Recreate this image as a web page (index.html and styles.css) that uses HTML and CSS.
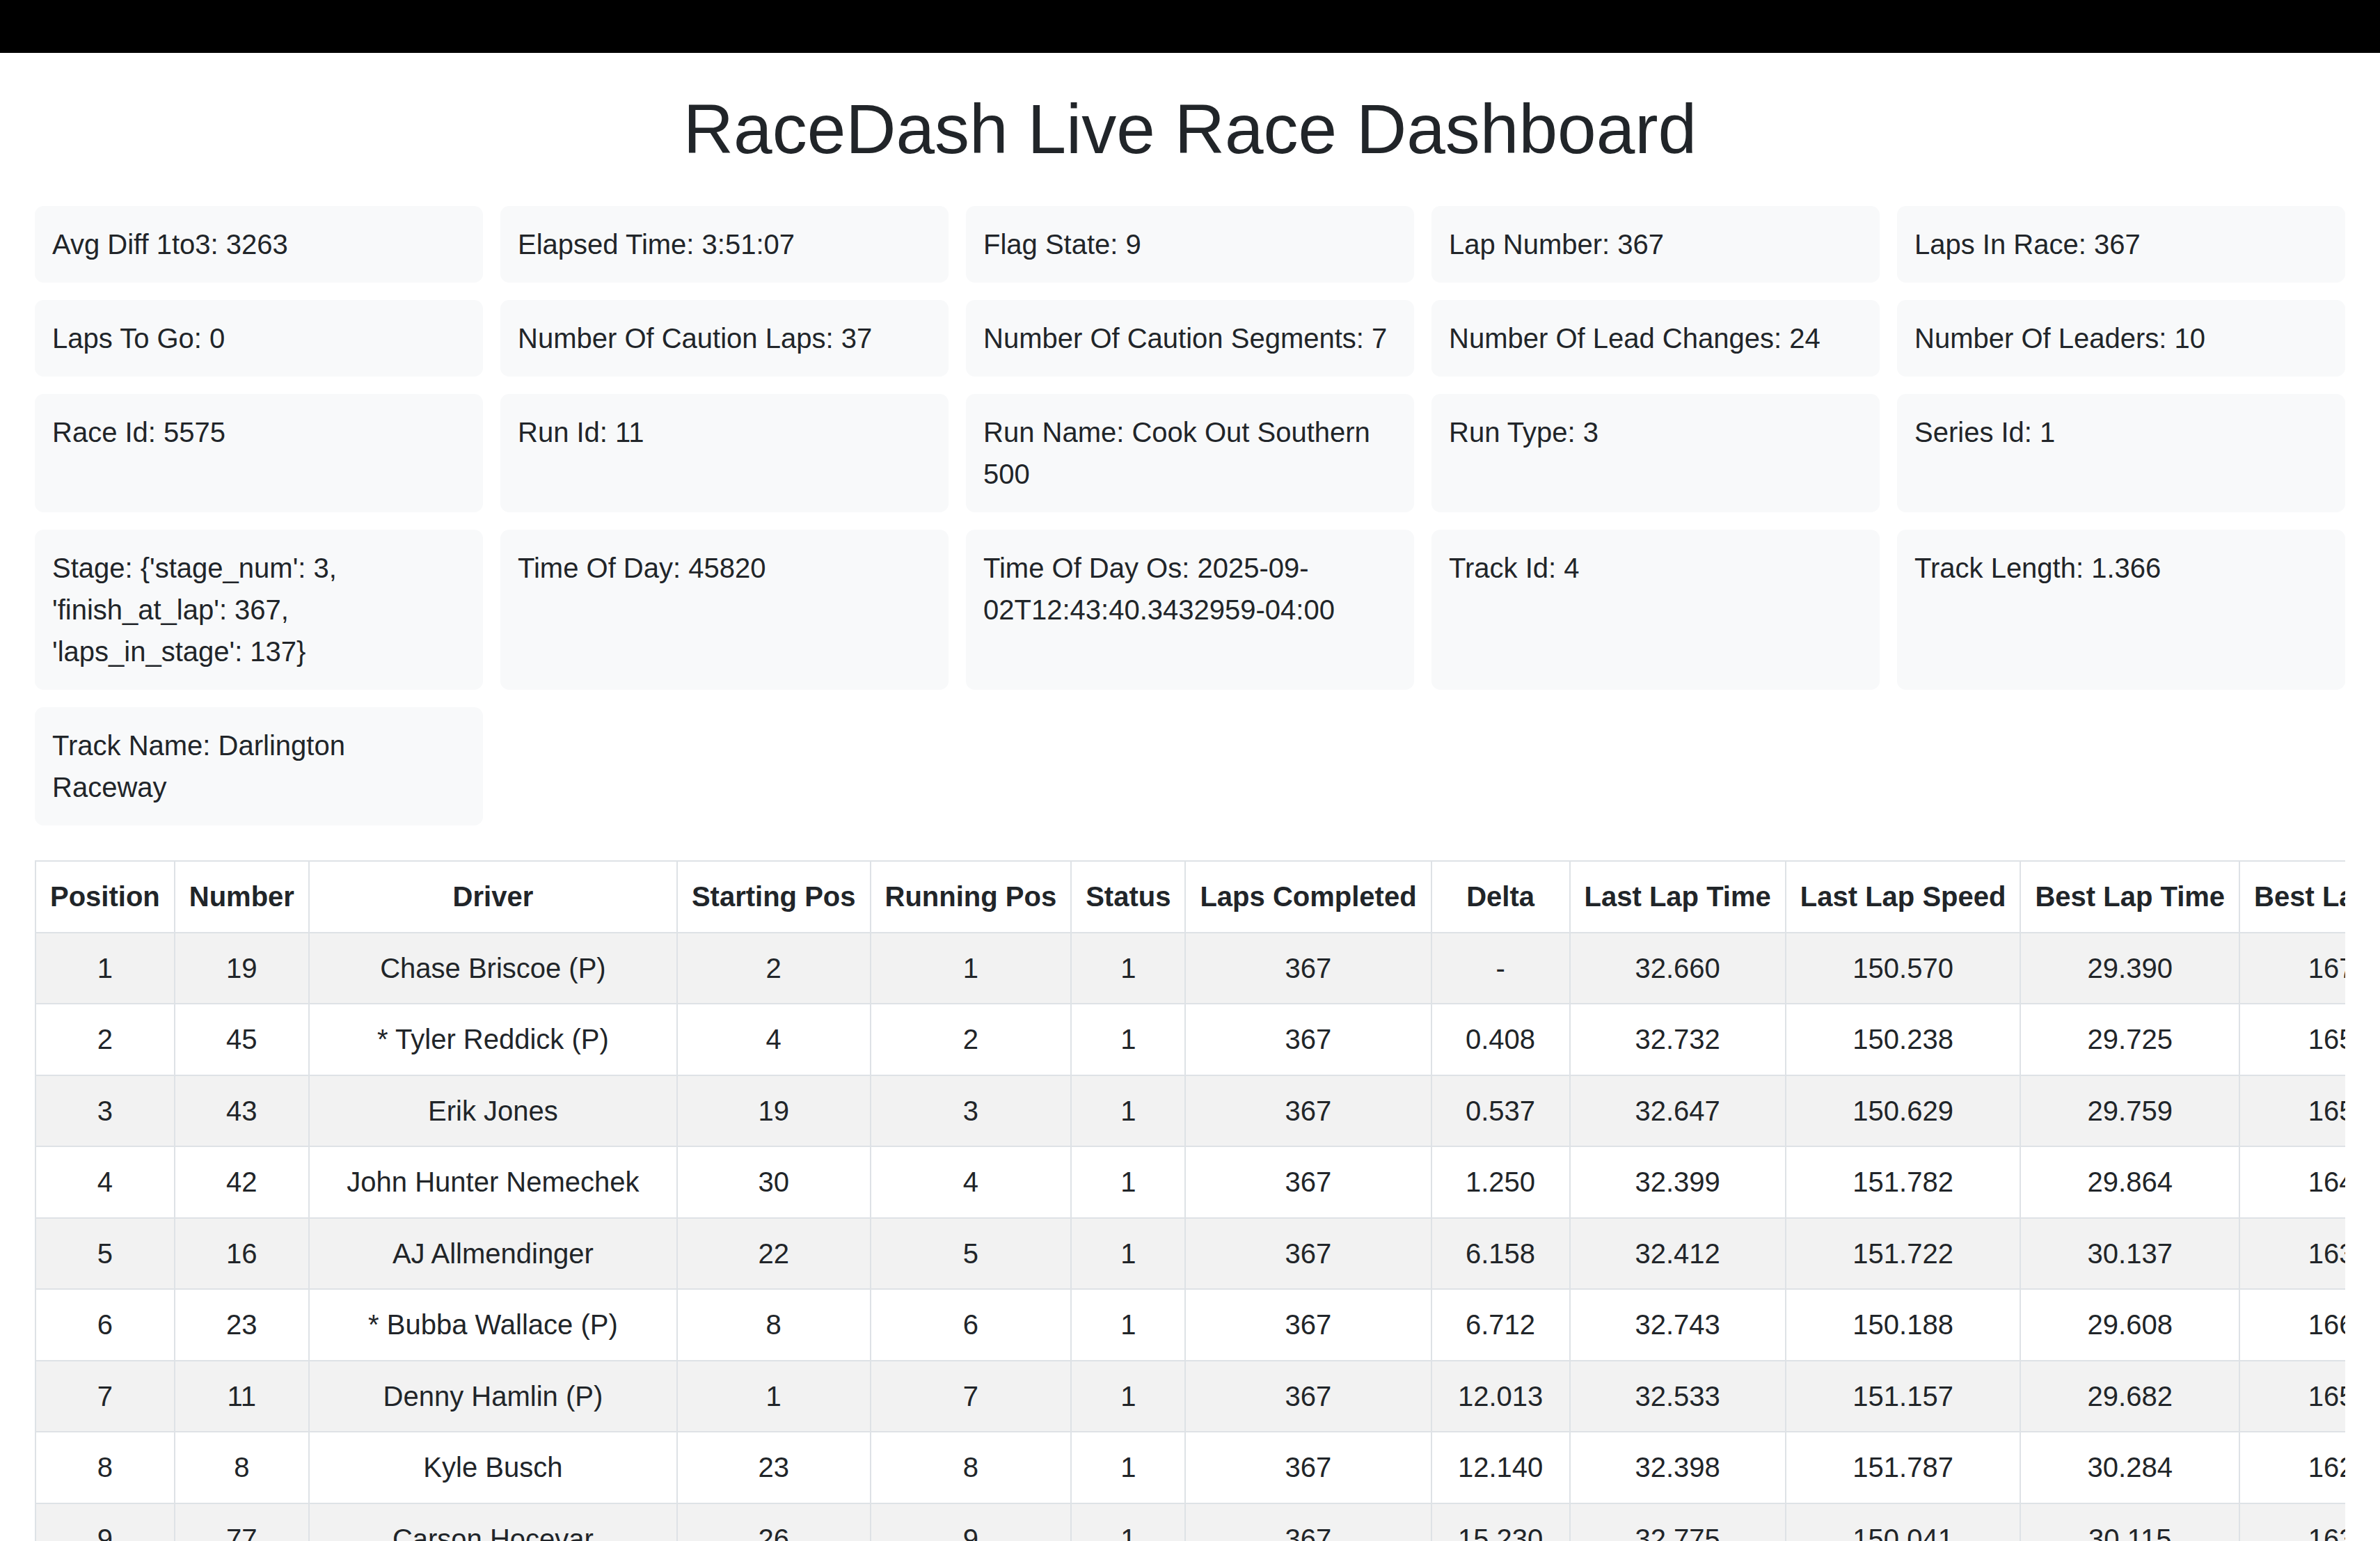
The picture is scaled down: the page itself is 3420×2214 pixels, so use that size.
FILE: index.html
```html
<!DOCTYPE html>
<html lang="en">
<head>
<meta charset="utf-8">
<title>RaceDash Live Race Dashboard</title>
<link rel="stylesheet" href="styles.css">
</head>
<body>
<header class="topbar"></header>
<main class="page">
  <h1 class="title">RaceDash Live Race Dashboard</h1>
  <section class="stats">
    <div class="stat">Avg Diff 1to3: 3263</div>
    <div class="stat">Elapsed Time: 3:51:07</div>
    <div class="stat">Flag State: 9</div>
    <div class="stat">Lap Number: 367</div>
    <div class="stat">Laps In Race: 367</div>
    <div class="stat">Laps To Go: 0</div>
    <div class="stat">Number Of Caution Laps: 37</div>
    <div class="stat">Number Of Caution Segments: 7</div>
    <div class="stat">Number Of Lead Changes: 24</div>
    <div class="stat">Number Of Leaders: 10</div>
    <div class="stat">Race Id: 5575</div>
    <div class="stat">Run Id: 11</div>
    <div class="stat">Run Name: Cook Out Southern 500</div>
    <div class="stat">Run Type: 3</div>
    <div class="stat">Series Id: 1</div>
    <div class="stat">Stage: {'stage_num': 3, 'finish_at_lap': 367, 'laps_in_stage': 137}</div>
    <div class="stat">Time Of Day: 45820</div>
    <div class="stat">Time Of Day Os: 2025-09-02T12:43:40.3432959-04:00</div>
    <div class="stat">Track Id: 4</div>
    <div class="stat">Track Length: 1.366</div>
    <div class="stat">Track Name: Darlington Raceway</div>
  </section>
  <div class="table-wrap">
    <table class="results">
      <thead>
        <tr>
          <th>Position</th>
          <th>Number</th>
          <th class="col-driver">Driver</th>
          <th>Starting Pos</th>
          <th>Running Pos</th>
          <th>Status</th>
          <th>Laps Completed</th>
          <th class="col-delta">Delta</th>
          <th>Last Lap Time</th>
          <th>Last Lap Speed</th>
          <th>Best Lap Time</th>
          <th>Best Lap Speed</th>
        </tr>
      </thead>
      <tbody>
        <tr><td>1</td><td>19</td><td>Chase Briscoe (P)</td><td>2</td><td>1</td><td>1</td><td>367</td><td>-</td><td>32.660</td><td>150.570</td><td>29.390</td><td>167.323</td></tr>
        <tr><td>2</td><td>45</td><td>* Tyler Reddick (P)</td><td>4</td><td>2</td><td>1</td><td>367</td><td>0.408</td><td>32.732</td><td>150.238</td><td>29.725</td><td>165.437</td></tr>
        <tr><td>3</td><td>43</td><td>Erik Jones</td><td>19</td><td>3</td><td>1</td><td>367</td><td>0.537</td><td>32.647</td><td>150.629</td><td>29.759</td><td>165.248</td></tr>
        <tr><td>4</td><td>42</td><td>John Hunter Nemechek</td><td>30</td><td>4</td><td>1</td><td>367</td><td>1.250</td><td>32.399</td><td>151.782</td><td>29.864</td><td>164.667</td></tr>
        <tr><td>5</td><td>16</td><td>AJ Allmendinger</td><td>22</td><td>5</td><td>1</td><td>367</td><td>6.158</td><td>32.412</td><td>151.722</td><td>30.137</td><td>163.175</td></tr>
        <tr><td>6</td><td>23</td><td>* Bubba Wallace (P)</td><td>8</td><td>6</td><td>1</td><td>367</td><td>6.712</td><td>32.743</td><td>150.188</td><td>29.608</td><td>166.090</td></tr>
        <tr><td>7</td><td>11</td><td>Denny Hamlin (P)</td><td>1</td><td>7</td><td>1</td><td>367</td><td>12.013</td><td>32.533</td><td>151.157</td><td>29.682</td><td>165.676</td></tr>
        <tr><td>8</td><td>8</td><td>Kyle Busch</td><td>23</td><td>8</td><td>1</td><td>367</td><td>12.140</td><td>32.398</td><td>151.787</td><td>30.284</td><td>162.383</td></tr>
        <tr><td>9</td><td>77</td><td>Carson Hocevar</td><td>26</td><td>9</td><td>1</td><td>367</td><td>15.230</td><td>32.775</td><td>150.041</td><td>30.115</td><td>163.294</td></tr>
      </tbody>
    </table>
  </div>
</main>
</body>
</html>
```

FILE: styles.css
```css
html, body {
  margin: 0;
  padding: 0;
  background: #ffffff;
}

body {
  font-family: "Liberation Sans", Arial, Helvetica, sans-serif;
  color: #212529;
  font-size: 40px;
  line-height: 1.5;
}

.topbar {
  height: 76px;
  background: #000000;
}

.page {
  padding: 0 50px;
}

.title {
  margin: 49px 0 51px;
  font-size: 100px;
  line-height: 1.2;
  font-weight: 500;
  text-align: center;
}

.stats {
  display: grid;
  grid-template-columns: repeat(5, minmax(0, 1fr));
  gap: 25px;
  margin-bottom: 50px;
}

.stat {
  background: #f8f9fa;
  border-radius: 12.5px;
  padding: 25px;
  line-height: 60px;
}

.table-wrap {
  overflow-x: auto;
}

.results {
  width: max-content;
  border-collapse: collapse;
  white-space: nowrap;
  line-height: 60px;
}

.results th,
.results td {
  padding: 20.25px 20px;
  border: 2px solid #dee2e6;
  text-align: center;
}

.results th {
  font-weight: 700;
  background: #ffffff;
}

.results tbody tr:nth-child(odd) td {
  background: #f2f2f2;
}

.col-driver {
  width: 487px;
}

.col-delta {
  width: 157px;
}
```
